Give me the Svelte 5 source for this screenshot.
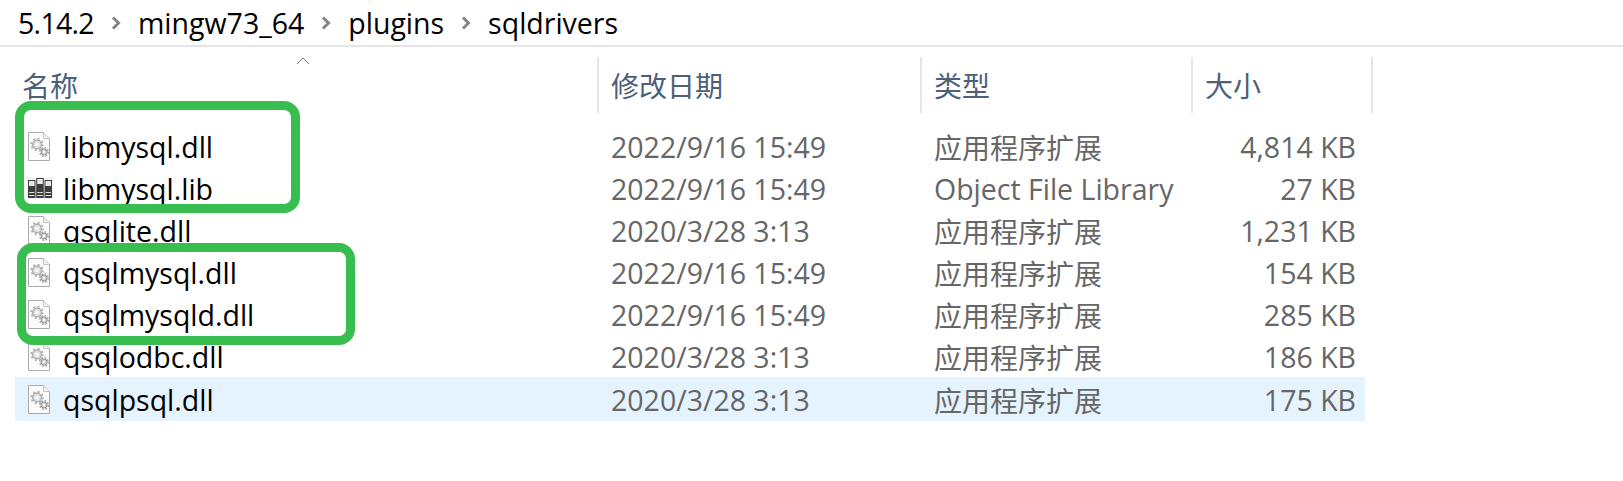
<script lang="ts">
  const crumbs = ["5.14.2", "mingw73_64", "plugins", "sqldrivers"];
  const columns = ["名称", "修改日期", "类型", "大小"];

  const DLL = "应用程序扩展";
  const files = [
    { name: "libmysql.dll", date: "2022/9/16 15:49", type: DLL, size: "4,814 KB", icon: "dll" },
    { name: "libmysql.lib", date: "2022/9/16 15:49", type: "Object File Library", size: "27 KB", icon: "lib" },
    { name: "qsqlite.dll", date: "2020/3/28 3:13", type: DLL, size: "1,231 KB", icon: "dll" },
    { name: "qsqlmysql.dll", date: "2022/9/16 15:49", type: DLL, size: "154 KB", icon: "dll" },
    { name: "qsqlmysqld.dll", date: "2022/9/16 15:49", type: DLL, size: "285 KB", icon: "dll" },
    { name: "qsqlodbc.dll", date: "2020/3/28 3:13", type: DLL, size: "186 KB", icon: "dll" },
    { name: "qsqlpsql.dll", date: "2020/3/28 3:13", type: DLL, size: "175 KB", icon: "dll", selected: true }
  ];
</script>

{#snippet dllIcon()}
  <svg class="icon" width="22" height="29" viewBox="0 0 22 29">
    <path d="M0.5 0.5H15.5L21.5 6.5V28.5H0.5Z" fill="#fcfcfc" stroke="#ababab" />
    <path d="M15.5 0.5V6.5H21.5" fill="#f0f0f0" stroke="#c4c4c4" />
    <circle cx="9" cy="12.5" r="4.4" fill="#e0e0e0" stroke="#a8a8a8" stroke-width="1.2" />
    <circle cx="9" cy="12.5" r="5.8" fill="none" stroke="#b0b0b0" stroke-width="1.8" stroke-dasharray="2 2.55" />
    <circle cx="9" cy="12.5" r="1.8" fill="#fcfcfc" />
    <circle cx="16" cy="20" r="3" fill="#cfcfcf" stroke="#969696" />
    <circle cx="16" cy="20" r="4.2" fill="none" stroke="#9c9c9c" stroke-width="1.5" stroke-dasharray="1.7 1.6" />
    <circle cx="16" cy="20" r="1.2" fill="#fcfcfc" />
  </svg>
{/snippet}

{#snippet libIcon()}
  <svg class="icon lib" width="26" height="22" viewBox="0 0 26 22">
    <rect width="26" height="22" fill="#f4f4f4" />
    <rect x="1" y="3" width="7.5" height="18" fill="#3d3d3d" />
    <rect x="2" y="4" width="5.5" height="5" fill="#e9e9e9" />
    <rect x="9.25" y="1" width="7.5" height="20" fill="#3d3d3d" />
    <rect x="10.25" y="2" width="5.5" height="5" fill="#e9e9e9" />
    <rect x="17.5" y="3" width="7.5" height="18" fill="#3d3d3d" />
    <rect x="18.5" y="4" width="5.5" height="5" fill="#e9e9e9" />
    <path d="M2 15.5H7.5M2 18.5H7.5M10.25 15.5H15.75M10.25 18.5H15.75M18.5 15.5H24M18.5 18.5H24" stroke="#e2e2e2" />
  </svg>
{/snippet}

<div class="window">
  <nav class="breadcrumb">
    {#each crumbs as crumb, i}
      {#if i > 0}
        <svg class="sep" width="10" height="14" viewBox="0 0 10 14">
          <path d="M2 1.5L7.5 7L2 12.5" fill="none" stroke="#848484" stroke-width="3" />
        </svg>
      {/if}
      <span>{crumb}</span>
    {/each}
  </nav>

  <div class="list">
    <div class="header">
      {#each columns as col, i}
        <div class="head-cell">
          {#if i === 0}
            <svg class="caret" width="14" height="8" viewBox="0 0 14 8">
              <path d="M1 7L7 1L13 7" fill="none" stroke="#777" />
            </svg>
          {/if}
          {col}
        </div>
      {/each}
    </div>

    <div class="rows">
      {#each files as file}
        <div class="row" class:selected={file.selected}>
          <div class="cell name">
            <span class="icon-box">
              {#if file.icon === "lib"}
                {@render libIcon()}
              {:else}
                {@render dllIcon()}
              {/if}
            </span>
            {file.name}
          </div>
          <div class="cell">{file.date}</div>
          <div class="cell" class:cjk={file.type === DLL}>{file.type}</div>
          <div class="cell size">{file.size}</div>
        </div>
      {/each}
    </div>

    <div class="mark mark-a"></div>
    <div class="mark mark-b"></div>
  </div>
</div>

<style>
  :global(body) {
    margin: 0;
    background: #fff;
  }

  .window {
    width: 1623px;
    height: 481px;
    overflow: hidden;
    font-family: "Open Sans", "Noto Sans CJK SC", sans-serif;
  }

  .breadcrumb {
    height: 47px;
    box-sizing: border-box;
    border-bottom: 2px solid #e5e5e5;
    padding-left: 18px;
    display: flex;
    align-items: center;
    gap: 17px;
    font-size: 28.5px;
    color: #000;
  }

  .breadcrumb span:first-child {
    letter-spacing: -0.7px;
  }

  .list {
    position: relative;
    padding-left: 15px;
  }

  .header {
    display: grid;
    grid-template-columns: 584px 323px 271px 180px;
    padding-top: 10px;
    height: 56px;
  }

  .head-cell {
    position: relative;
    border-right: 2px solid #e5e5e5;
    padding-top: 11px;
    padding-left: 7px;
    font-size: 28px;
    line-height: 36px;
    color: #4c607a;
  }

  .head-cell:not(:first-child) {
    padding-left: 12px;
  }

  .caret {
    position: absolute;
    left: 281px;
    top: 0;
  }

  .rows {
    margin-top: 12px;
  }

  .row {
    display: grid;
    grid-template-columns: 584px 323px 271px 165px;
    width: 1350px;
    height: 42px;
    align-items: center;
    font-size: 28.5px;
    color: #666;
  }

  .row.selected {
    height: 44px;
    background: #e5f3ff;
  }

  .cell {
    padding: 2px 0 0 12px;
    white-space: nowrap;
  }

  .cjk {
    font-size: 28px;
  }

  .name {
    padding-left: 13px;
    display: flex;
    align-items: center;
    color: #000;
  }

  .icon-box {
    width: 35px;
    margin-top: -2px;
    display: flex;
  }

  .icon {
    display: block;
  }

  .icon.lib {
    margin-left: -1px;
  }

  .size {
    padding: 2px 2px 0 0;
    text-align: right;
  }

  .mark {
    position: absolute;
    box-sizing: border-box;
    border: 9px solid #38bd4f;
    border-radius: 16px;
  }

  .mark-a {
    left: 15px;
    top: 54px;
    width: 285px;
    height: 112px;
  }

  .mark-b {
    left: 17px;
    top: 196px;
    width: 338px;
    height: 102px;
  }
</style>
